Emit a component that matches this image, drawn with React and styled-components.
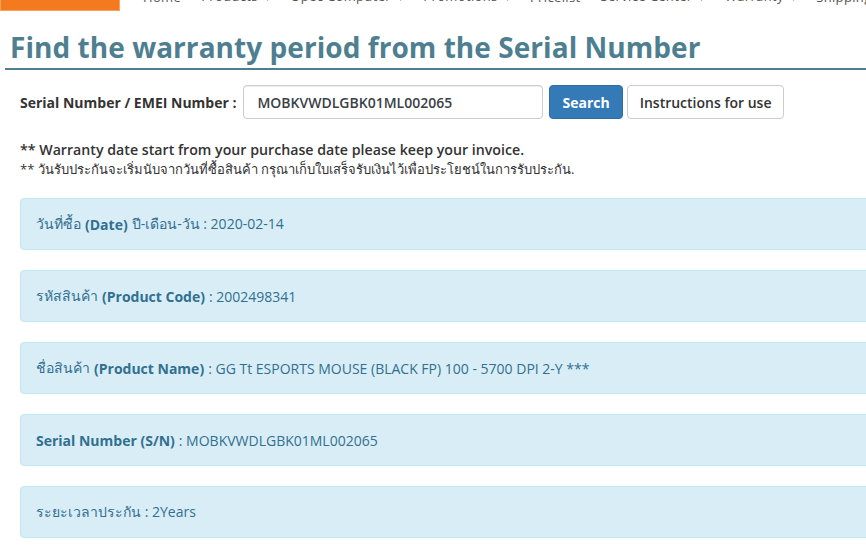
import React from "react"
import styled, { createGlobalStyle } from "styled-components"

const GlobalStyle = createGlobalStyle`
  html, body {
    margin: 0;
    padding: 0;
    background: #fff;
    overflow: hidden;
  }
  body {
    font-family: "Open Sans", "Noto Sans", sans-serif;
    color: #333;
  }
`

const Page = styled.div`
  width: 1000px;
`

const TopBar = styled.header`
  display: flex;
  height: 11px;
  overflow: hidden;
`

const Logo = styled.div`
  width: 118px;
  height: 10px;
  background: #f47a20;
  border: 1px solid #f9a25a;
  border-top: none;
  flex-shrink: 0;
`

const NavList = styled.nav`
  display: flex;
  align-items: flex-end;
  margin-left: 13px;
`

const NavItem = styled.span`
  padding: 0 10px 7px;
  font-size: 13px;
  line-height: 14px;
  letter-spacing: 0.35px;
  color: #555;
  white-space: nowrap;
  &::after {
    content: ${({ $drop }) => ($drop ? '"▾"' : "none")};
    margin-left: 7px;
    font-size: 10px;
  }
`

const TitleWrap = styled.div`
  margin: 16px 0 0 5px;
  padding: 0 5px 1px;
  border-bottom: 2px solid #4e7f91;
`

const Title = styled.h1`
  margin: 0;
  font-size: 28px;
  line-height: 40px;
  font-weight: 700;
  color: #4e7f91;
  letter-spacing: 0.05px;
`

const Content = styled.div`
  padding: 15px 0 0 20px;
`

const SearchRow = styled.form`
  display: flex;
  align-items: center;
  gap: 4px;
`

const Label = styled.label`
  font-size: 14px;
  font-weight: 700;
  color: #333;
  margin-right: 3px;
`

const Input = styled.input`
  box-sizing: border-box;
  width: 300px;
  height: 34px;
  padding: 6px 13px;
  border: 1px solid #ccc;
  border-radius: 4px;
  font-family: inherit;
  font-size: 14px;
  font-weight: 600;
  color: #3a3f48;
  box-shadow: inset 0 1px 1px rgba(0, 0, 0, 0.075);
`

const Button = styled.button`
  box-sizing: border-box;
  height: 34px;
  padding: 0 12px;
  border-radius: 4px;
  font-family: inherit;
  font-size: 14px;
  margin-left: ${({ $gap }) => $gap || 0}px;
  border: 1px solid ${({ $primary }) => ($primary ? "#2e6da4" : "#ccc")};
  background: ${({ $primary }) => ($primary ? "#337ab7" : "#fff")};
  color: ${({ $primary }) => ($primary ? "#fff" : "#333")};
  font-weight: ${({ $primary }) => ($primary ? 700 : 600)};
`

const Notes = styled.div`
  margin-top: 21px;
`

const NoteEn = styled.p`
  margin: 0;
  font-size: 14.2px;
  line-height: 20px;
  font-weight: 600;
  color: #333;
`

const NoteTh = styled.p`
  margin: 0;
  font-size: 13px;
  line-height: 18px;
  color: #333;
`

const Panels = styled.div`
  margin-top: 20px;
  display: flex;
  flex-direction: column;
  gap: 20px;
`

const Panel = styled.div`
  box-sizing: border-box;
  height: 52px;
  display: flex;
  align-items: center;
  gap: 4px;
  padding: 0 15px;
  background: #d9edf7;
  border: 1px solid #bce8f1;
  border-radius: 4px;
  color: #31708f;
  font-size: 14px;
  font-weight: 500;
`

const Strong = styled.b`
  font-weight: 700;
`

const navItems = [
  { label: "Home" },
  { label: "Products", drop: true },
  { label: "Opec Computer", drop: true },
  { label: "Promotions", drop: true },
  { label: "Pricelist" },
  { label: "Service Center", drop: true },
  { label: "Warranty", drop: true },
  { label: "Shipping" },
]

const rows = [
  { pre: "วันที่ซื้อ", bold: "(Date)", post: "ปี-เดือน-วัน : 2020-02-14" },
  { pre: "รหัสสินค้า", bold: "(Product Code)", post: ": 2002498341" },
  { pre: "ชื่อสินค้า", bold: "(Product Name)", post: ": GG Tt ESPORTS MOUSE (BLACK FP) 100 - 5700 DPI 2-Y ***" },
  { pre: "", bold: "Serial Number (S/N)", post: ": MOBKVWDLGBK01ML002065" },
  { pre: "ระยะเวลาประกัน : 2Years", bold: "", post: "" },
]

export default function App() {
  return (
    <Page>
      <GlobalStyle />
      <TopBar>
        <Logo />
        <NavList>
          {navItems.map((n) => (
            <NavItem key={n.label} $drop={n.drop}>
              {n.label}
            </NavItem>
          ))}
        </NavList>
      </TopBar>

      <TitleWrap>
        <Title>Find the warranty period from the Serial Number</Title>
      </TitleWrap>

      <Content>
        <SearchRow onSubmit={(e) => e.preventDefault()}>
          <Label>Serial Number / EMEI Number :</Label>
          <Input defaultValue="MOBKVWDLGBK01ML002065" />
          <Button $primary $gap={2}>Search</Button>
          <Button>Instructions for use</Button>
        </SearchRow>

        <Notes>
          <NoteEn>** Warranty date start from your purchase date please keep your invoice.</NoteEn>
          <NoteTh>** วันรับประกันจะเริ่มนับจากวันที่ซื้อสินค้า กรุณาเก็บใบเสร็จรับเงินไว้เพื่อประโยชน์ในการรับประกัน.</NoteTh>
        </Notes>

        <Panels>
          {rows.map((r, i) => (
            <Panel key={i}>
              {r.pre && <span>{r.pre}</span>}
              {r.bold && <Strong>{r.bold}</Strong>}
              {r.post && <span>{r.post}</span>}
            </Panel>
          ))}
        </Panels>
      </Content>
    </Page>
  )
}
